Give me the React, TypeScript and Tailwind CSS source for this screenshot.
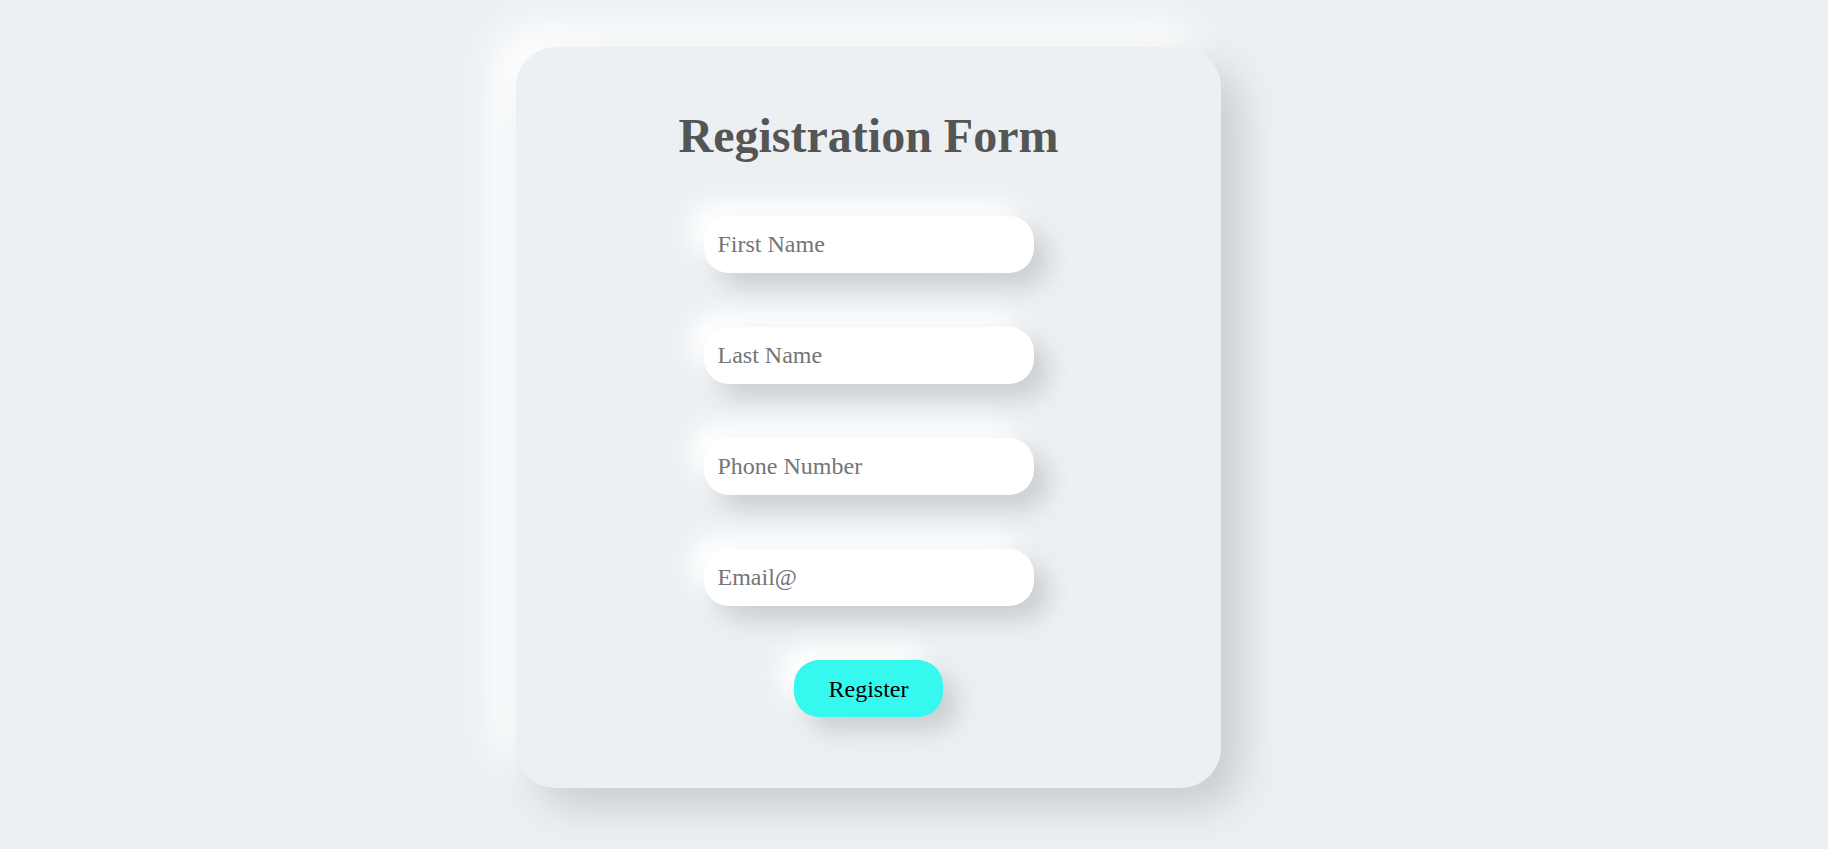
import React from "react";

const fields = ["First Name", "Last Name", "Phone Number", "Email@"];

export default function App() {
  return (
    <div className="min-h-screen w-full overflow-hidden bg-[#ecf0f3] pt-[47px] pb-[61px] font-['Liberation_Serif','Times_New_Roman',serif]">
      {/* card */}
      <div className="ml-[516px] flex w-[705px] flex-col items-center gap-[54px] rounded-[40px] bg-[#ecf0f3] pt-[62px] pb-[71px] shadow-[20px_20px_40px_#c9cdd1,-22px_-22px_40px_#ffffff]">
        <h1 className="text-[48px] leading-[53px] font-bold text-[#555555]">
          Registration Form
        </h1>
        {fields.map((f) => (
          <input
            key={f}
            type="text"
            placeholder={f}
            className="h-[57px] w-[330px] rounded-[25px] bg-white px-[14px] text-[24px] text-[#333] outline-none placeholder:text-[#757575] shadow-[14px_14px_24px_#cbced1,-14px_-14px_24px_#ffffff]"
          />
        ))}
        <button
          type="button"
          className="h-[57px] w-[149px] rounded-[25px] bg-[#35f8ee] text-[24px] text-black shadow-[14px_14px_24px_#cbced1,-14px_-14px_24px_#ffffff]"
        >
          Register
        </button>
      </div>
    </div>
  );
}
